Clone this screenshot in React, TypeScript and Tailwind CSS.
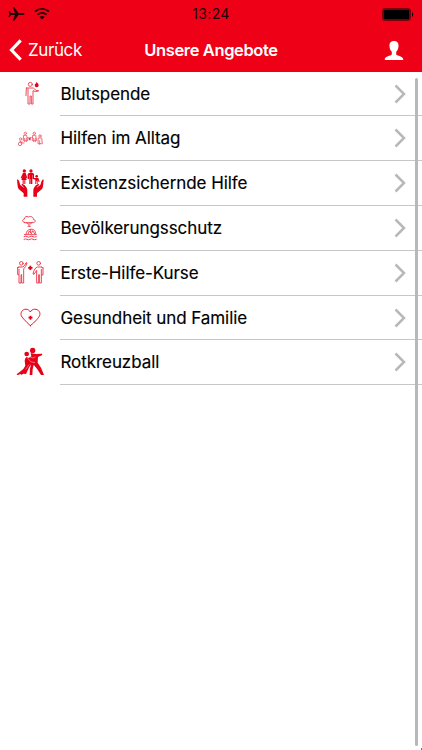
import React from "react";

const RED = "#e60018";

function Icon({ children, box = "0 0 150 120" }: { children: React.ReactNode; box?: string }) {
  return (
    <svg className="mt-[2px] ml-2 h-10 w-[50px] shrink-0" viewBox={box} fill="none" stroke={RED} strokeLinecap="round" strokeLinejoin="round">
      {children}
    </svg>
  );
}

const BloodIcon = () => (
  <Icon>
    <g strokeWidth="3" opacity="0.7">
      <circle cx="67" cy="31" r="6" />
      <path d="M55 42h21l8 7 7 1M55 42l-1 23M60 44v46h6V66h4v24h5V50l8 3 8-2" />
    </g>
    <path d="M86 24c3 5 6 6 6 10a6 6 0 0 1-12 0c0-3 4-5 6-10Z" fill={RED} stroke="none" />
  </Icon>
);

const DailyIcon = () => (
  <Icon box="0 -3 150 120">
    <g strokeWidth="2.8" opacity="0.6">
      <circle cx="52" cy="43" r="3.5" />
      <path d="M48 49h8l3 16H47zM50 58v10M55 58v10" />
      <circle cx="79" cy="43" r="3.5" />
      <path d="M75 49h8l3 16H74zM77 58v10M82 58v10" />
      <circle cx="96" cy="51" r="3.5" />
      <path d="M92 57h9l2 17H91zM95 65v11" />
      <circle cx="38" cy="60" r="3.5" />
      <path d="M36 66l6 6h6M35 69h8" />
      <circle cx="36" cy="75" r="5" />
    </g>
    <path d="M62 54l3 2 3-2v10h-6z" fill={RED} stroke="none" opacity="0.75" />
    <path d="M59 56l6 2 6-3" strokeWidth="1.8" opacity="0.6" />
  </Icon>
);

const HandsIcon = () => (
  <Icon>
    <g fill={RED} stroke="none">
      <circle cx="49" cy="24" r="5" />
      <path d="M45 30h8l5 15-3 1-3-8 4 13h-4v12h-3V51h-2v12h-3V51h-4l4-13-3 8-3-1z" />
      <circle cx="69" cy="24" r="5" />
      <path d="M63 30h12l3 3v15h-4V36h-1v27h-4V48h-1v15h-4V36h-1v12h-4V33z" />
      <circle cx="86" cy="40" r="4" />
      <path d="M81 45h10l4 11-3 1-3-7v13h-2v-8h-2v8h-3V50l-6-2 1-3z" />
      <path d="M27 50q4-1 6 4l4 12 12 9q-5-7-8-8-2-4 3-4 7 3 11 10 4 5 3 13v15H47V91L32 78q-3-4-3-9z" />
      <path d="M107 50q-4-1-6 4l-4 12-12 9q5-7 8-8 2-4-3-4-7 3-11 10-4 5-3 13v15h11V91l15-13q3-4 3-9z" />
    </g>
  </Icon>
);

const DisasterIcon = () => (
  <Icon>
    <g strokeWidth="2.9" opacity="0.75">
      <path d="M49 43c-7-1-7-9 0-10 0-6 7-10 12-6 8-4 16 1 15 7 8 1 7 9 0 10H49Z" />
      <path d="M55 44l5 4M72 44l-5 4M63 46v8M60 55h7" />
      <path d="M49 80h36M54 79c1-10 6-14 14-15 10-2 16 6 15 15M60 78l4-9 6 8 4-9 6 9M68 64v9" />
      <path d="M48 86q5-3 9 0t9 0 9 0 10 0M48 94q5-3 9 0t9 0 9 0 10 0" />
    </g>
  </Icon>
);

const FirstAidIcon = () => (
  <Icon>
    <g strokeWidth="2.8" opacity="0.78">
      <circle cx="40" cy="31" r="5.5" />
      <path d="M32 42h13l5-5 4-8 3 1-4 10-6 8v42h-6V65h-2v25h-6V49M29 43v22h3M33 42l-4 3" />
      <circle cx="92" cy="31" r="5.5" />
      <path d="M100 42H88l-5 3-6 10-2 8 3 1 8-12v38h6V65h2v25h6V49M105 44v22h-3M100 42l5 3" />
    </g>
    <path d="M67 38v13M60.500 44.500h13" strokeWidth="5.500" strokeLinecap="butt" />
  </Icon>
);

const HeartIcon = () => (
  <Icon>
    <path d="M67 83Q57 74 47 63C39 54 37 49 41 41c5-10 21-10 26 1 5-11 21-11 27-1 4 8 1 14-7 23Q77 76 67 83Z" strokeWidth="3" opacity="0.9" />
    <path d="M67.500 53v12M61.500 59h12" strokeWidth="5" strokeLinecap="butt" />
  </Icon>
);

const DanceIcon = () => (
  <Icon>
    <g fill={RED} stroke="none">
      <circle cx="74" cy="25.500" r="8" />
      <circle cx="56" cy="36" r="7" />
      <path d="M68 33l9 2 8 1 17-1 1 4-13 6-1 17 10 15 9 22h-9L88 82 77 68l-3 14-1 17h-8l1-19 3-13-7 12-8 17-8-1-5 3q-4 1-3-3l-6 3q-5 2-6-1l9-7q13-8 17-19l-2-15q0-7 6-11l6 3 8-5z" />
    </g>
    <path d="M60 50l8 9 12 3M65 44l9 4 7-3M54 81l9-12" stroke="#fff" strokeWidth="1.3" />
  </Icon>
);

const Chevron = () => (
  <svg className="h-5 w-3 shrink-0" viewBox="0 0 12 20" fill="none" stroke="#b8b8b8" strokeWidth="2.5">
    <path d="M1.500 1.500 10 10l-8.500 8.500" />
  </svg>
);

const rows = [
  { label: "Blutspende", icon: <BloodIcon />, height: "h-[44px]" },
  { label: "Hilfen im Alltag", icon: <DailyIcon />, height: "h-[45px]" },
  { label: "Existenzsichernde Hilfe", icon: <HandsIcon />, height: "h-[45px]" },
  { label: "Bevölkerungsschutz", icon: <DisasterIcon />, height: "h-[45px]" },
  { label: "Erste-Hilfe-Kurse", icon: <FirstAidIcon />, height: "h-[45px]" },
  { label: "Gesundheit und Familie", icon: <HeartIcon />, height: "h-[44px]" },
  { label: "Rotkreuzball", icon: <DanceIcon />, height: "h-[45px]" },
];

export default function App() {
  return (
    <div className="relative flex h-[750px] w-[422px] flex-col overflow-hidden bg-white font-['Inter','Liberation_Sans',sans-serif]">
      <header className="h-[72px] shrink-0 bg-[#ee0016]">
        <div className="grid h-7 grid-cols-3 items-center text-black">
          <div className="flex items-center gap-[9px] pl-2">
            <svg className="h-4 w-[17px]" viewBox="0 0 17 16" fill="#210004">
              <path d="M16.500 8c0-.7-.8-1-1.700-1h-4.300L6.200 1.300H4.700L7 7H3L1.500 5H.5l.8 3-.8 3h1L3 9h4l-2.300 5.700h1.500L10.500 9h4.300c.9 0 1.700-.3 1.700-1Z" />
            </svg>
            <svg className="h-4 w-4" viewBox="0 0 16 16" fill="none" stroke="#210004" strokeWidth="1.700">
              <path d="M1 5.500q7-5.500 14 0M3.400 8.700q4.600-3.600 9.200 0" />
              <path d="M8 13.500 5.400 11q2.600-2 5.200 0z" fill="#210004" stroke="none" />
            </svg>
          </div>
          <span className="text-center text-[14px] leading-5 tracking-[0.3px] text-[#210004]">13:24</span>
          <div className="flex justify-end pr-[8px]">
            <svg className="h-[13px] w-[32px]" viewBox="0 0 32 13">
              <rect x="0.500" y="0.500" width="28" height="12" rx="2" fill="none" stroke="#7c000b" />
              <rect x="1.500" y="1.500" width="26" height="10" rx="1" fill="#000" />
              <path d="M30 4q2.500 2.500 0 5z" fill="#000" />
            </svg>
          </div>
        </div>
        <div className="grid h-11 grid-cols-[1fr_auto_1fr] items-center text-white">
          <div className="flex items-center gap-[6px] pl-[9px]">
            <svg className="h-[22px] w-[13px]" viewBox="0 0 13 22" fill="none" stroke="#fff" strokeWidth="3.200">
              <path d="M11.700 1.300 2.500 11l9.200 9.700" />
            </svg>
            <span className="text-[17px] leading-6 tracking-[-0.4px]">Zurück</span>
          </div>
          <h1 className="text-[16.5px] font-semibold leading-6 tracking-[-0.38px]">Unsere Angebote</h1>
          <div className="flex justify-end pr-[18px]">
            <svg className="h-[19px] w-5" viewBox="0 0 20 19" fill="#fff">
              <path d="M10 0c3.400 0 4.700 2.200 4.500 5.200-.1 2.900-1.300 4.500-2.300 5.600v2.600c1.500 1.500 6.300 1.500 7.100 4.700.1.500-.2.900-.6.900H1.300c-.4 0-.7-.4-.6-.9.800-3.200 5.600-3.200 7.100-4.700v-2.600C6.800 9.700 5.600 8.100 5.500 5.200 5.300 2.200 6.600 0 10 0Z" />
            </svg>
          </div>
        </div>
      </header>
      <main>
        {rows.map((row) => (
          <div key={row.label} className={`flex ${row.height}`}>
            {row.icon}
            <div className="ml-[2px] flex flex-1 items-center justify-between border-b border-[#c6c6c8] pl-[0.5px] pr-4">
              <span className="text-[17px] leading-6 tracking-[-0.07px] text-black [-webkit-text-stroke:0.15px_#000]">{row.label}</span>
              <Chevron />
            </div>
          </div>
        ))}
      </main>
      <div className="absolute left-[415px] top-[78px] h-[668px] w-[3px] rounded-full bg-[#b8b8b8]" />
      <div className="absolute bottom-0 right-0 h-[2px] w-px bg-[#777]" />
    </div>
  );
}
